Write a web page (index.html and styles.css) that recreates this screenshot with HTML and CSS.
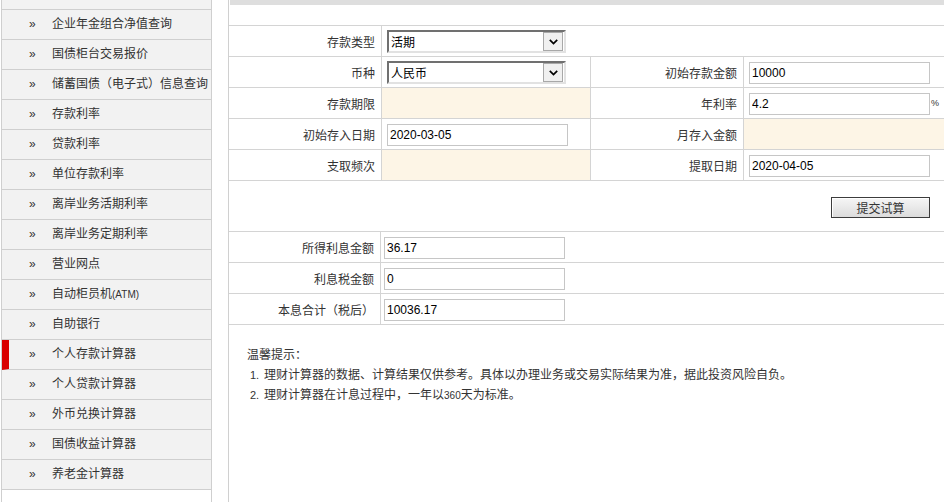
FILE: index.html
```html
<!DOCTYPE html>
<html lang="zh-CN">
<head>
<meta charset="utf-8">
<title>个人存款计算器</title>
<link rel="stylesheet" href="styles.css">
</head>
<body>
<div class="page">
  <aside class="side">
    <div class="side-cut"></div>
    <ul class="menu">
      <li class="item"><span class="arr">»</span>企业年金组合净值查询</li>
      <li class="item"><span class="arr">»</span>国债柜台交易报价</li>
      <li class="item"><span class="arr">»</span>储蓄国债（电子式）信息查询</li>
      <li class="item"><span class="arr">»</span>存款利率</li>
      <li class="item"><span class="arr">»</span>贷款利率</li>
      <li class="item"><span class="arr">»</span>单位存款利率</li>
      <li class="item"><span class="arr">»</span>离岸业务活期利率</li>
      <li class="item"><span class="arr">»</span>离岸业务定期利率</li>
      <li class="item"><span class="arr">»</span>营业网点</li>
      <li class="item"><span class="arr">»</span>自动柜员机<span class="atm">(ATM)</span></li>
      <li class="item"><span class="arr">»</span>自助银行</li>
      <li class="item active"><span class="arr">»</span>个人存款计算器</li>
      <li class="item"><span class="arr">»</span>个人贷款计算器</li>
      <li class="item"><span class="arr">»</span>外币兑换计算器</li>
      <li class="item"><span class="arr">»</span>国债收益计算器</li>
      <li class="item"><span class="arr">»</span>养老金计算器</li>
    </ul>
  </aside>
  <main class="main">
    <div class="topbar"></div>
    <div class="spacer"></div>
    <div class="form">
      <div class="cell lbl">存款类型</div>
      <div class="cell val span3">
        <div class="select"><span class="select-text">活期</span><span class="select-btn"><svg width="9" height="6" viewBox="0 0 9 6"><path d="M0.8 0.8 L4.5 4.6 L8.2 0.8" fill="none" stroke="#000" stroke-width="1.7"/></svg></span></div>
      </div>

      <div class="cell lbl">币种</div>
      <div class="cell val">
        <div class="select"><span class="select-text">人民币</span><span class="select-btn"><svg width="9" height="6" viewBox="0 0 9 6"><path d="M0.8 0.8 L4.5 4.6 L8.2 0.8" fill="none" stroke="#000" stroke-width="1.7"/></svg></span></div>
      </div>
      <div class="cell lbl">初始存款金额</div>
      <div class="cell val last"><input class="inp" type="text" value="10000"></div>

      <div class="cell lbl">存款期限</div>
      <div class="cell val peach"></div>
      <div class="cell lbl">年利率</div>
      <div class="cell val last"><input class="inp" type="text" value="4.2"><span class="pct">%</span></div>

      <div class="cell lbl">初始存入日期</div>
      <div class="cell val"><input class="inp" type="text" value="2020-03-05"></div>
      <div class="cell lbl">月存入金额</div>
      <div class="cell val last peach"></div>

      <div class="cell lbl">支取频次</div>
      <div class="cell val peach"></div>
      <div class="cell lbl">提取日期</div>
      <div class="cell val last"><input class="inp" type="text" value="2020-04-05"></div>
    </div>
    <div class="actions"><button class="btn" type="button">提交试算</button></div>
    <div class="results">
      <div class="cell rlbl">所得利息金额</div>
      <div class="cell rval"><input class="inp" type="text" value="36.17"></div>
      <div class="cell rlbl">利息税金额</div>
      <div class="cell rval"><input class="inp" type="text" value="0"></div>
      <div class="cell rlbl">本息合计（税后）</div>
      <div class="cell rval"><input class="inp" type="text" value="10036.17"></div>
    </div>
    <div class="tips">
      <div class="tips-title">温馨提示：</div>
      <div class="tip"><span class="num">1.</span>理财计算器的数据、计算结果仅供参考。具体以办理业务或交易实际结果为准，据此投资风险自负。</div>
      <div class="tip"><span class="num">2.</span>理财计算器在计息过程中，一年以<span class="small">360</span>天为标准。</div>
    </div>
  </main>
</div>
</body>
</html>
```
FILE: styles.css
```css
* { box-sizing: border-box; }
html, body { margin: 0; padding: 0; }
body {
  font: 12px "Liberation Sans", "Noto Sans CJK SC", sans-serif;
  color: #333;
  background: #fff;
}
.page {
  display: flex;
  height: 502px;
  overflow: hidden;
}
.side {
  flex: none;
  width: 211px;
  margin-left: 1px;
  height: 502px;
  border-left: 1px solid #cfcfcf;
  border-right: 1px solid #cfcfcf;
}
.side-cut {
  height: 10px;
  background: #f2f2f2;
  border-bottom: 1px solid #cfcfcf;
}
.menu { list-style: none; margin: 0; padding: 0; }
.item {
  height: 30px;
  line-height: 29px;
  background: #f2f2f2;
  border-bottom: 1px solid #cfcfcf;
  padding-left: 27px;
  white-space: nowrap;
  color: #333;
}
.item.active {
  border-left: 7px solid #d90000;
  padding-left: 20px;
}
.arr {
  display: inline-block;
  width: 23px;
  font-size: 12px;
}
.atm { font-size: 10px; }
.main {
  flex: 1;
  margin-left: 16px;
  border-left: 1px solid #d0d0d0;
}
.topbar {
  height: 5px;
  margin-left: 1px;
  background: #dedede;
}
.spacer { height: 20px; }
.form {
  display: grid;
  grid-template-columns: 153px 209px 153px 1fr;
  border-top: 1px solid #d4d4d4;
}
.cell {
  height: 31px;
  border-bottom: 1px solid #d4d4d4;
  border-right: 1px solid #d4d4d4;
  display: flex;
  align-items: center;
}
.cell.last, .span3 { border-right: none; }
.span3 { grid-column: 2 / 5; }
.lbl {
  justify-content: flex-end;
  padding-right: 6px;
  color: #333;
}
.val { padding-left: 5px; }
.peach { background: #fdf5e6; }
.select {
  width: 179px;
  height: 23px;
  border: 2px solid;
  border-color: #707070 #e2e2e2 #e2e2e2 #707070;
  background: #fff;
  display: flex;
  align-items: center;
  margin-top: 1px;
}
.select-text {
  flex: 1;
  padding-left: 2px;
  color: #000;
}
.select-btn {
  width: 20px;
  height: 19px;
  margin-right: 1px;
  border: 1px solid #a8a8a8;
  background: #f0f0f0;
  display: flex;
  align-items: center;
  justify-content: center;
}
.inp {
  width: 181px;
  height: 22px;
  margin: 1px 0 0;
  border: 1px solid #c6c6c6;
  padding: 0 0 0 2px;
  font: 12px "Liberation Sans", "Noto Sans CJK SC", sans-serif;
  color: #000;
  background: #fff;
  outline: none;
}
.pct {
  font-size: 9px;
  margin-left: 1px;
  color: #333;
}
.actions {
  height: 51px;
  border-bottom: 1px solid #d4d4d4;
  display: flex;
  justify-content: flex-end;
  align-items: flex-start;
  padding: 16px 14px 0 0;
}
.btn {
  width: 99px;
  height: 21px;
  padding: 0;
  border: 1px solid #3c3c3c;
  background: linear-gradient(#f6f6f6, #dcdcdc);
  box-shadow: inset 1px 1px 0 #fff;
  font: 12px "Liberation Sans", "Noto Sans CJK SC", sans-serif;
  color: #333;
}
.results {
  display: grid;
  grid-template-columns: 152px 1fr;
}
.rlbl {
  justify-content: flex-end;
  padding-right: 6px;
}
.rval {
  border-right: none;
  padding-left: 3px;
}
.tips {
  padding: 20px 0 0 18px;
  line-height: 20px;
  color: #333;
}
.tip { padding-left: 3px; }
.num {
  display: inline-block;
  width: 14px;
  font-size: 11px;
}
.small { font-size: 10px; }
```
